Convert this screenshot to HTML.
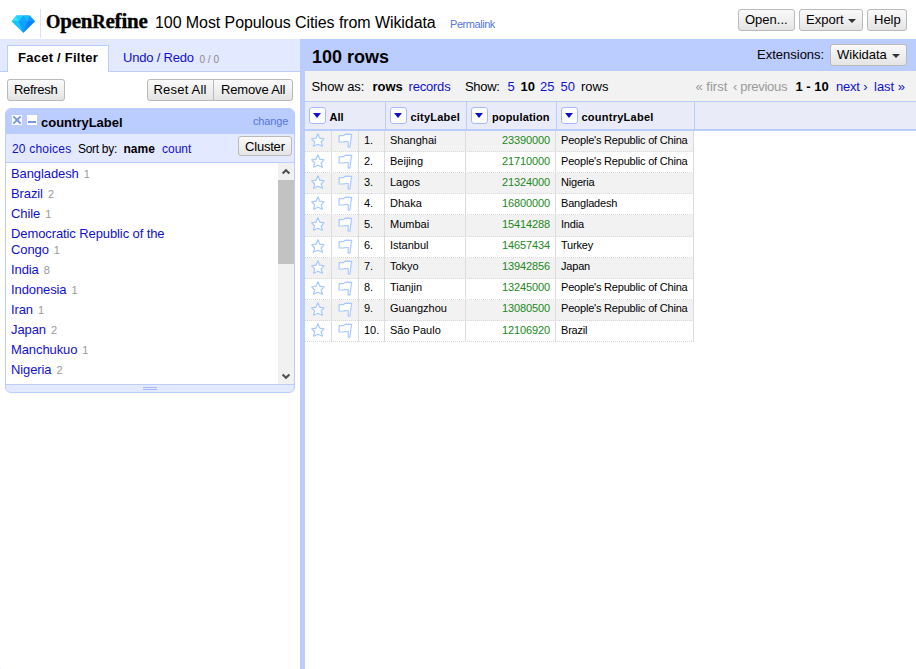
<!DOCTYPE html>
<html><head><meta charset="utf-8"><style>
*{box-sizing:border-box}
html,body{margin:0;padding:0}
body{width:916px;height:669px;overflow:hidden;position:relative;background:#fff;font-family:"Liberation Sans",sans-serif;font-size:13px;color:#000}
.a{position:absolute;white-space:nowrap;line-height:20px}
.lnk{color:#11c}
.btn{position:absolute;border:1px solid #bababa;border-radius:3px;background:linear-gradient(#fafafa,#e4e4e4);color:#000;font-size:13px;line-height:20px;white-space:nowrap}
.tri{position:absolute;width:0;height:0;border-left:3.5px solid transparent;border-right:3.5px solid transparent;border-top:4px solid #333}
.dd{position:absolute;top:107px;width:17px;height:17px;background:#fff;border:1px solid #a9b9ff;border-radius:3px}
.dd:after{content:"";position:absolute;left:3px;top:5px;width:0;height:0;border-left:4.7px solid transparent;border-right:4.7px solid transparent;border-top:5.4px solid #11c}
.thl{position:absolute;top:107px;font-weight:bold;font-size:11px;line-height:20px;white-space:nowrap}
.row{position:absolute;left:305px;width:389px;border-bottom:1px dotted #dadada;font-size:11px;line-height:18px}
.row.odd{background:#f2f2f2}
.row span{position:absolute;top:0;white-space:nowrap}
.cn{left:59px}.cc{left:85px}.cp{right:144px;color:#282;letter-spacing:-0.12px}.ck{left:256px;letter-spacing:-0.2px}
.star{position:absolute;left:5px;top:1px}
.flag{position:absolute;left:32px;top:1px}
.vsep{position:absolute;top:131px;width:1px;height:211px;background:#dcdcdc}
.ch{position:absolute;left:11px;font-size:13px;line-height:20px;color:#11c;white-space:nowrap;letter-spacing:-0.1px}
.ct{color:#999;font-size:11px;margin-left:2px;letter-spacing:0}
</style></head><body>
<svg class="a" style="left:11px;top:14.5px;line-height:0" width="25" height="18" viewBox="0 0 25 18">
  <polygon points="5.5,0.5 18.5,0.5 24,6.3 12.25,17.8 0.7,6.3" fill="#16a6ff"/>
  <polygon points="0.7,6.3 5.5,0.5 7.8,6.3" fill="#2ee4ff"/>
  <polygon points="5.5,0.5 12.25,0.5 7.8,6.3" fill="#1ed2ff"/>
  <polygon points="12.25,0.5 18.5,0.5 16.7,6.3" fill="#18bcff"/>
  <polygon points="18.5,0.5 24,6.3 16.7,6.3" fill="#1696ff"/>
  <polygon points="0.7,6.3 7.8,6.3 12.25,17.8" fill="#16c4ff"/>
  <polygon points="7.8,6.3 16.7,6.3 12.25,17.8" fill="#0ea2ff"/>
  <polygon points="16.7,6.3 24,6.3 12.25,17.8" fill="#0a82ff"/>
</svg>
<div class="a" style="left:40px;top:9px;width:1px;height:29px;background:#d6e0ff"></div>
<div class="a" style="left:46px;top:9px;font-family:'Liberation Serif',serif;font-weight:bold;font-size:21px;line-height:24px;letter-spacing:-0.2px;-webkit-text-stroke:0.35px #000"><span style="font-size:18.5px">O</span>pen<span style="font-size:18.5px">R</span>efine</div>
<div class="a" style="left:155px;top:13px;font-size:16px;letter-spacing:-0.08px">100 Most Populous Cities from Wikidata</div>
<div class="a" style="left:450px;top:14px;font-size:11px;color:#5577e0;letter-spacing:-0.45px">Permalink</div>
<div class="btn" style="left:738px;top:9px;width:57px;height:22px;padding-left:6px">Open...</div>
<div class="btn" style="left:799px;top:9px;width:64px;height:22px;padding-left:6px">Export<span class="tri" style="left:48px;top:9px;border-left-width:4px;border-right-width:4px;border-top-width:4.5px"></span></div>
<div class="btn" style="left:867px;top:9px;width:40px;height:22px;padding-left:6px">Help</div>
<div class="a" style="left:0;top:39px;width:300px;height:33px;background:#e3e9ff;border-bottom:1px solid #bcf"></div>
<div class="a" style="left:7px;top:45px;width:102px;height:27px;background:#fff;border:1px solid #bcf;border-bottom:none"></div>
<div class="a" style="left:18px;top:48px;font-weight:bold;letter-spacing:0.25px">Facet / Filter</div>
<div class="a lnk" style="left:123px;top:48px;letter-spacing:-0.2px">Undo / Redo</div>
<div class="a" style="left:199.5px;top:50px;font-size:10px;color:#8a8a8a">0 / 0</div>
<div class="btn" style="left:7px;top:79px;width:58px;height:22px;padding-left:6px;letter-spacing:-0.3px">Refresh</div>
<div class="btn" style="left:147px;top:79px;width:67px;height:22px;padding-left:5.5px;letter-spacing:0.2px;border-radius:3px 0 0 3px">Reset All</div>
<div class="btn" style="left:213px;top:79px;width:80px;height:22px;padding-left:7px;border-radius:0 3px 3px 0;letter-spacing:-0.15px">Remove All</div>
<div class="a" style="left:5px;top:108px;width:290px;height:285px;border:1px solid #bcf;border-radius:6px;background:#e3e9ff;overflow:hidden"><div class="a" style="left:0;top:0;width:288px;height:25px;background:#bcf"></div><div class="a" style="left:0;top:53px;width:288px;height:223px;background:#fff;border-top:1px solid #bcf;border-bottom:1px solid #bcf"></div></div>
<svg class="a" style="left:12px;top:115px;line-height:0" width="10" height="10" viewBox="0 0 10 10">
<rect width="10" height="10" fill="#fff"/>
<path d="M2,2 L8,8 M8,2 L2,8" stroke="#7898e6" stroke-width="1.8" stroke-linecap="square"/>
<circle cx="5" cy="5" r="1.4" fill="#7898e6"/>
</svg>
<svg class="a" style="left:27px;top:115px;line-height:0" width="10" height="10" viewBox="0 0 10 10">
<rect width="10" height="10" fill="#fff"/>
<rect x="1" y="6" width="8" height="2" fill="#7898e6"/>
</svg>
<div class="a" style="left:41px;top:113px;font-weight:bold">countryLabel</div>
<div class="a" style="left:253px;top:111px;font-size:11px;color:#5577e0;letter-spacing:-0.15px">change</div>
<div class="a lnk" style="left:12px;top:139px;font-size:12px;letter-spacing:0.2px">20 choices</div>
<div class="a" style="left:78px;top:139px;font-size:12px;letter-spacing:-0.3px">Sort by:</div>
<div class="a" style="left:123.5px;top:139px;font-size:12px;font-weight:bold">name</div>
<div class="a lnk" style="left:162px;top:139px;font-size:12px">count</div>
<div class="btn" style="left:238px;top:136px;width:54px;height:20px;padding-left:6px;letter-spacing:-0.2px">Cluster</div>
<div class="ch" style="top:164px">Bangladesh<span class="ct"> 1</span></div>
<div class="ch" style="top:184px">Brazil<span class="ct"> 2</span></div>
<div class="ch" style="top:204px">Chile<span class="ct"> 1</span></div>
<div class="ch" style="top:226px;line-height:16px">Democratic Republic of the<br>Congo<span class="ct"> 1</span></div>
<div class="ch" style="top:260px">India<span class="ct"> 8</span></div>
<div class="ch" style="top:280px">Indonesia<span class="ct"> 1</span></div>
<div class="ch" style="top:300px">Iran<span class="ct"> 1</span></div>
<div class="ch" style="top:320px">Japan<span class="ct"> 2</span></div>
<div class="ch" style="top:340px">Manchukuo<span class="ct"> 1</span></div>
<div class="ch" style="top:360px">Nigeria<span class="ct"> 2</span></div>
<div class="a" style="left:278px;top:163px;width:16px;height:221px;background:#f1f1f1"></div>
<div class="a" style="left:278px;top:180px;width:16px;height:84px;background:#c2c2c2"></div>
<svg class="a" style="left:278px;top:163px;line-height:0" width="16" height="17" viewBox="0 0 16 17">
<path d="M4.6,10.5 L8,7.2 L11.4,10.5" fill="none" stroke="#505050" stroke-width="2.1"/></svg>
<svg class="a" style="left:278px;top:367px;line-height:0" width="16" height="17" viewBox="0 0 16 17">
<path d="M4.6,7.5 L8,10.8 L11.4,7.5" fill="none" stroke="#505050" stroke-width="2.1"/></svg>
<div class="a" style="left:143px;top:387px;width:14px;height:1px;background:#a9b9ff"></div>
<div class="a" style="left:143px;top:389px;width:14px;height:1px;background:#a9b9ff"></div>
<div class="a" style="left:300px;top:39px;width:616px;height:32px;background:#bcf"></div>
<div class="a" style="left:300px;top:39px;width:5px;height:630px;background:#bcf"></div>
<div class="a" style="left:312px;top:47px;font-weight:bold;font-size:18px">100 rows</div>
<div class="a" style="left:757px;top:45px">Extensions:</div>
<div class="btn" style="left:830px;top:44px;width:77px;height:22px;padding-left:6px;line-height:20px">Wikidata<span class="tri" style="left:60.5px;top:9px;border-left-width:4px;border-right-width:4px;border-top-width:4.5px"></span></div>
<div class="a" style="left:305px;top:71px;width:611px;height:31px;background:#f2f2f2;border-bottom:1px solid #bcf"></div>
<div class="a" style="left:311.5px;top:77px;letter-spacing:-0.1px">Show as:</div>
<div class="a" style="left:372.5px;top:77px;font-weight:bold;">rows</div>
<div class="a" style="left:408.5px;top:77px;color:#11c;letter-spacing:-0.2px">records</div>
<div class="a" style="left:465px;top:77px;letter-spacing:-0.3px">Show:</div>
<div class="a" style="left:507.5px;top:77px;color:#11c;">5</div>
<div class="a" style="left:520.5px;top:77px;font-weight:bold;">10</div>
<div class="a" style="left:540px;top:77px;color:#11c;">25</div>
<div class="a" style="left:560.5px;top:77px;color:#11c;">50</div>
<div class="a" style="left:581px;top:77px;">rows</div>
<div class="a" style="left:695.5px;top:77px;color:#999;">« first</div>
<div class="a" style="left:733px;top:77px;color:#999;letter-spacing:-0.3px">‹ previous</div>
<div class="a" style="left:795.5px;top:77px;font-weight:bold;">1 - 10</div>
<div class="a" style="left:836px;top:77px;color:#11c;letter-spacing:-0.2px">next ›</div>
<div class="a" style="left:874px;top:77px;color:#11c;">last »</div>
<div class="a" style="left:305px;top:102px;width:611px;height:29px;background:#e9ecf8;border-bottom:2px solid #bcf"></div>
<div class="a" style="left:385px;top:102px;width:1px;height:27px;background:#bcf"></div>
<div class="a" style="left:466px;top:102px;width:1px;height:27px;background:#bcf"></div>
<div class="a" style="left:556px;top:102px;width:1px;height:27px;background:#bcf"></div>
<div class="a" style="left:694px;top:102px;width:1px;height:27px;background:#bcf"></div>
<div class="dd" style="left:309px"></div>
<div class="dd" style="left:390px"></div>
<div class="dd" style="left:471px"></div>
<div class="dd" style="left:561px"></div>
<div class="thl" style="left:329.5px">All</div>
<div class="thl" style="left:410.5px;letter-spacing:0.2px">cityLabel</div>
<div class="thl" style="left:492px;letter-spacing:0.15px">population</div>
<div class="thl" style="left:581.5px;letter-spacing:0.25px">countryLabel</div>
<svg width="0" height="0" style="position:absolute"><defs>
<g id="star"><polygon points="7.9,1.8 9.8,6.2 14.1,6.8 11.1,10 12.5,14.2 7.9,12.2 3.5,14.2 4.7,10 1.7,6.8 6,6.2" fill="#fff" stroke="#a8caff" stroke-width="1.2" stroke-linejoin="round"/></g>
<g id="flag"><path d="M2.2,3.7 L6.6,3.7 C7.4,2.4 8.2,2.1 9,2.1 L14.7,2.3 L14,6.5 L12.9,14.9 Q11.8,15.6 11.2,14.8 L11.2,9.7 Q9.5,9.3 6.6,9.8 L2,10 Z" fill="#fff" stroke="#a8caff" stroke-width="1.2" stroke-linejoin="round"/></g>
</defs></svg>
<div class="row odd" style="top:131px;height:21px"><svg class="star" width="16" height="16" viewBox="0 0 16 16"><use href="#star"/></svg><svg class="flag" width="16" height="16" viewBox="0 0 16 16"><use href="#flag"/></svg><span class="cn" style="top:0px">1.</span><span class="cc" style="top:0px">Shanghai</span><span class="cp" style="top:0px">23390000</span><span class="ck" style="top:0px">People's Republic of China</span></div>
<div class="row" style="top:152px;height:21px"><svg class="star" width="16" height="16" viewBox="0 0 16 16"><use href="#star"/></svg><svg class="flag" width="16" height="16" viewBox="0 0 16 16"><use href="#flag"/></svg><span class="cn" style="top:0px">2.</span><span class="cc" style="top:0px">Beijing</span><span class="cp" style="top:0px">21710000</span><span class="ck" style="top:0px">People's Republic of China</span></div>
<div class="row odd" style="top:173px;height:21px"><svg class="star" width="16" height="16" viewBox="0 0 16 16"><use href="#star"/></svg><svg class="flag" width="16" height="16" viewBox="0 0 16 16"><use href="#flag"/></svg><span class="cn" style="top:0px">3.</span><span class="cc" style="top:0px">Lagos</span><span class="cp" style="top:0px">21324000</span><span class="ck" style="top:0px">Nigeria</span></div>
<div class="row" style="top:194px;height:21px"><svg class="star" width="16" height="16" viewBox="0 0 16 16"><use href="#star"/></svg><svg class="flag" width="16" height="16" viewBox="0 0 16 16"><use href="#flag"/></svg><span class="cn" style="top:0px">4.</span><span class="cc" style="top:0px">Dhaka</span><span class="cp" style="top:0px">16800000</span><span class="ck" style="top:0px">Bangladesh</span></div>
<div class="row odd" style="top:215px;height:22px"><svg class="star" width="16" height="16" viewBox="0 0 16 16"><use href="#star"/></svg><svg class="flag" width="16" height="16" viewBox="0 0 16 16"><use href="#flag"/></svg><span class="cn" style="top:0px">5.</span><span class="cc" style="top:0px">Mumbai</span><span class="cp" style="top:0px">15414288</span><span class="ck" style="top:0px">India</span></div>
<div class="row" style="top:237px;height:21px"><svg class="star" width="16" height="16" viewBox="0 0 16 16"><use href="#star"/></svg><svg class="flag" width="16" height="16" viewBox="0 0 16 16"><use href="#flag"/></svg><span class="cn" style="top:-1px">6.</span><span class="cc" style="top:-1px">Istanbul</span><span class="cp" style="top:-1px">14657434</span><span class="ck" style="top:-1px">Turkey</span></div>
<div class="row odd" style="top:258px;height:21px"><svg class="star" width="16" height="16" viewBox="0 0 16 16"><use href="#star"/></svg><svg class="flag" width="16" height="16" viewBox="0 0 16 16"><use href="#flag"/></svg><span class="cn" style="top:-1px">7.</span><span class="cc" style="top:-1px">Tokyo</span><span class="cp" style="top:-1px">13942856</span><span class="ck" style="top:-1px">Japan</span></div>
<div class="row" style="top:279px;height:21px"><svg class="star" width="16" height="16" viewBox="0 0 16 16"><use href="#star"/></svg><svg class="flag" width="16" height="16" viewBox="0 0 16 16"><use href="#flag"/></svg><span class="cn" style="top:-1px">8.</span><span class="cc" style="top:-1px">Tianjin</span><span class="cp" style="top:-1px">13245000</span><span class="ck" style="top:-1px">People's Republic of China</span></div>
<div class="row odd" style="top:300px;height:21px"><svg class="star" width="16" height="16" viewBox="0 0 16 16"><use href="#star"/></svg><svg class="flag" width="16" height="16" viewBox="0 0 16 16"><use href="#flag"/></svg><span class="cn" style="top:-1px">9.</span><span class="cc" style="top:-1px">Guangzhou</span><span class="cp" style="top:-1px">13080500</span><span class="ck" style="top:-1px">People's Republic of China</span></div>
<div class="row" style="top:321px;height:21px"><svg class="star" width="16" height="16" viewBox="0 0 16 16"><use href="#star"/></svg><svg class="flag" width="16" height="16" viewBox="0 0 16 16"><use href="#flag"/></svg><span class="cn" style="top:0px">10.</span><span class="cc" style="top:0px">São Paulo</span><span class="cp" style="top:0px">12106920</span><span class="ck" style="top:0px">Brazil</span></div>
<div class="vsep" style="left:331px"></div>
<div class="vsep" style="left:358px"></div>
<div class="vsep" style="left:384px"></div>
<div class="vsep" style="left:465px"></div>
<div class="vsep" style="left:555px"></div>
<div class="vsep" style="left:693px"></div>
<div class="a" style="left:0;top:668px;width:1px;height:1px;background:#e3e9ff"></div>
</body></html>
